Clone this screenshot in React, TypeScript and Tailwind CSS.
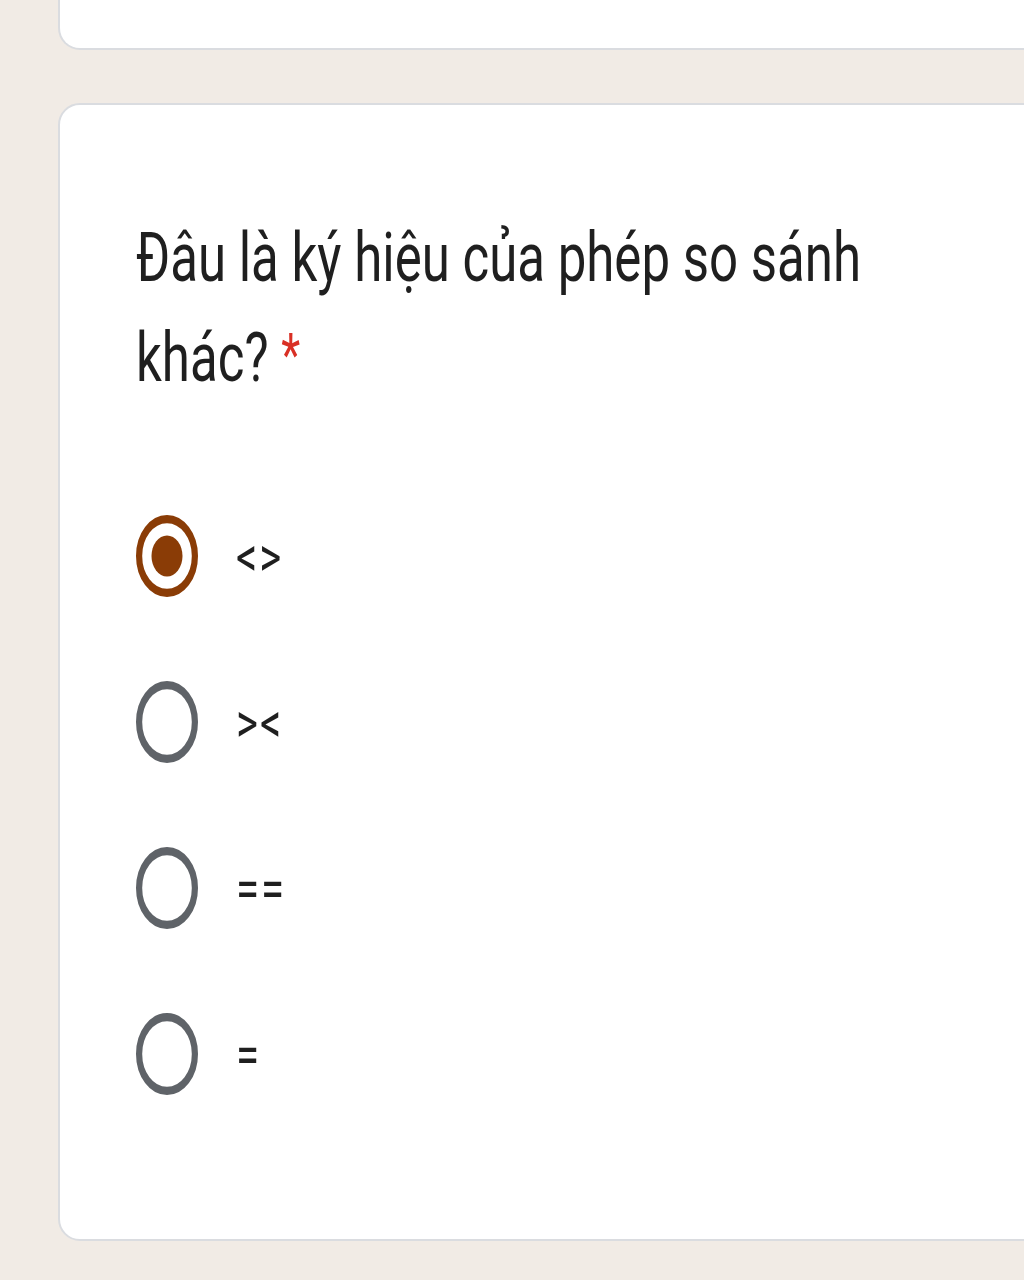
const options = ['<>', '><', '==', '='];

function Radio({ checked }: { checked: boolean }) {
  const color = checked ? '#8a3c06' : '#5f6368';
  return (
    <svg width="62" height="82" viewBox="0 0 20 20" preserveAspectRatio="none" className="shrink-0">
      <circle cx="10" cy="10" r="9" fill="none" stroke={color} strokeWidth="2" />
      {checked && <circle cx="10" cy="10" r="5" fill={color} />}
    </svg>
  );
}

export default function App() {
  const selected = 0;

  return (
    <div
      className="w-[1024px] h-[1280px] overflow-hidden bg-[#f1ebe5] pl-[58px] text-[#1f1f1f]"
      style={{ fontFamily: 'Roboto, "Noto Sans", sans-serif' }}
    >
      {/* previous card, only its bottom shows */}
      <div className="-mr-10 h-[50px] rounded-b-[22px] border-2 border-t-0 border-[#dadce0] bg-white" />

      <div className="-mr-10 mt-[53px] h-[1138px] rounded-[22px] border-2 border-[#dadce0] bg-white pl-[76px] pt-[103px]">
        <div className="text-[51px]">
          <div className="flex h-[100px] items-center">
            <span className="inline-block scale-y-[1.33]">Đâu là ký hiệu của phép so sánh</span>
          </div>
          <div className="flex h-[100px] items-center">
            <span className="inline-block scale-y-[1.33]">
              khác? <span className="align-[4px] text-[44px] text-[#d93025]">*</span>
            </span>
          </div>
        </div>

        <div className="mt-[65px] flex flex-col">
          {options.map((opt, i) => (
            <label key={opt} className="flex h-[166px] cursor-pointer items-center gap-[38px]">
              <Radio checked={i === selected} />
              <span className="inline-block scale-y-[1.33] text-[42px] tracking-[2px]">{opt}</span>
            </label>
          ))}
        </div>
      </div>
    </div>
  );
}
